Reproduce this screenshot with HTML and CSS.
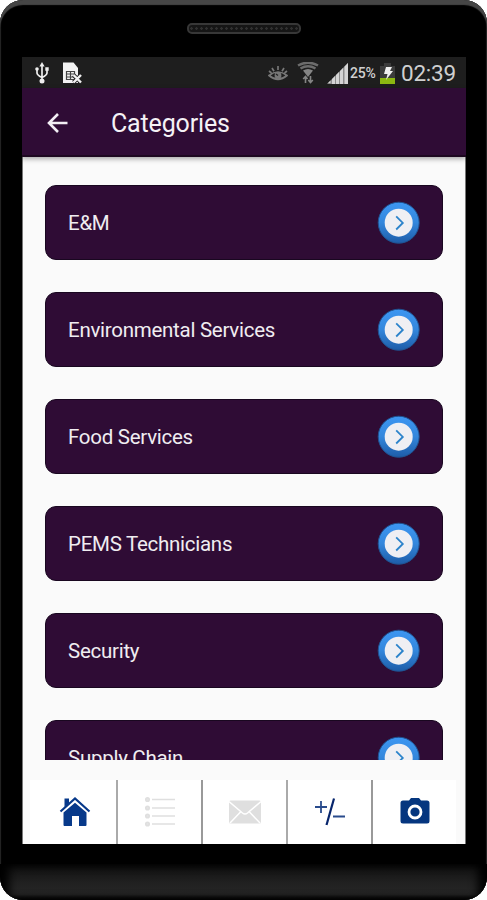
FILE: index.html
```html
<!DOCTYPE html>
<html lang="en">
<head>
<meta charset="utf-8">
<title>Categories</title>
<link rel="stylesheet" href="styles.css">
</head>
<body>
<svg class="defs" width="0" height="0" aria-hidden="true">
  <defs>
    <linearGradient id="ring" x1="0" y1="0" x2="0" y2="1">
      <stop offset="0" stop-color="#3c96f2"/>
      <stop offset=".5" stop-color="#3487dc"/>
      <stop offset="1" stop-color="#1d5ca8"/>
    </linearGradient>
    <symbol id="go" viewBox="0 0 44 44">
      <circle cx="21.700" cy="21.700" r="20.500" fill="url(#ring)" stroke="#1f5391" stroke-width="1"/>
      <circle cx="21.700" cy="21.700" r="14" fill="#efeff3"/>
      <path d="M19.200 15.300l6.600 6.600-6.600 6.600" fill="none" stroke="#2b83cb" stroke-width="1.800"/>
    </symbol>
  </defs>
</svg>
<div class="phone">
  <div class="forehead"><div class="speaker"></div></div>
  <div class="screen">
    <div class="status">
      <svg class="usb" width="14" height="22" viewBox="0 0 14 22" fill="none" stroke="#eee" stroke-width="1.700">
        <path d="M7 3v16M2 7v4q0 2 5 4.500M12 7v4q0 2-5 4.500"/>
        <path d="M7 0l2.600 4.500H4.400z" fill="#eee" stroke="none"/>
        <circle cx="7" cy="19" r="2.500" fill="#eee" stroke="none"/>
        <circle cx="2" cy="7" r="1.800" fill="#eee" stroke="none"/>
        <path d="M10.300 5.300h3.400v3.400h-3.400z" fill="#eee" stroke="none"/>
      </svg>
      <svg class="sim" width="20" height="22" viewBox="0 0 20 22">
        <path d="M1 .5h10.500L16 6v15H1z" fill="#f2f2f2"/>
        <path d="M4.500 9.500h8v8h-8zM4.500 12h8M4.500 15h8M8.500 9.500v8" fill="none" stroke="#444" stroke-width="1.200"/>
        <path d="M11.500 13l7.500 7.500M19 13l-7.500 7.500" stroke="#222" stroke-width="4"/>
        <path d="M11.500 13l7.500 7.500M19 13l-7.500 7.500" stroke="#f2f2f2" stroke-width="2.400"/>
      </svg>
      <svg class="eye" width="20" height="16" viewBox="0 0 20 16" fill="none" stroke="#777" stroke-width="1.700">
        <path d="M1 9.500Q10 2.500 19 9.500Q10 17 1 9.500zM10 0v4M4 2l2 3.300M16 2l-2 3.300M1 5l2.500 2M19 5l-2.500 2"/>
        <circle cx="10" cy="9.500" r="3.400" fill="#777" stroke="none"/>
        <path d="M8 8l2 1.500" stroke="#222" stroke-width="1.200"/>
      </svg>
      <svg class="wifi" width="22" height="22" viewBox="0 0 22 22" fill="none" stroke="#6c6c6c">
        <path d="M1 3.500Q11-2 21 3.500M3.500 6.500Q11 2 18.500 6.500" stroke-width="2.500"/>
        <path d="M6 8.600Q11 5.500 16 8.600L11 15z" fill="#858585" stroke="none"/>
        <path d="M8.500 21v-6.500M6.200 17l2.300-2.500 2 2.500M13.500 14v6.500M11.300 18l2.200 2.500 2.300-2.500" stroke="#858585" stroke-width="1.600"/>
      </svg>
      <svg class="signal" width="21" height="21" viewBox="0 0 21 21">
        <path d="M0 21L21 0v21z" fill="#8c8c8c"/>
        <path d="M1 20h2.500v-2.500zM5 21h3v-8L5 16zM9 21h3V9L9 12zM13 21h3V5l-3 3zM17.500 21H21V0l-3.500 3.500z" fill="#d4d4d4"/>
      </svg>
      <span class="percent">25%</span>
      <svg class="battery" width="15" height="21" viewBox="0 0 15 21">
        <path d="M4 0h7v3h4v18H0V3h4z" fill="#3b3b3b"/>
        <path d="M0 15h15v6H0z" fill="#8cb811"/>
        <path d="M6 4h6l-2 4h3l-7 9 1.500-6H4z" fill="#f0f0f0"/>
      </svg>
      <span class="clock">02:39</span>
    </div>
    <header class="appbar">
      <svg class="back" width="22" height="22" viewBox="0 0 22 22" fill="none" stroke="#f2eef4" stroke-width="2.600"><path d="M20.500 11H2.500M11 2l-9 9 9 9"/></svg>
      <h1>Categories</h1>
    </header>
    <main class="list">
      <div class="card"><span>E&amp;M</span><svg class="go"><use href="#go"/></svg></div>
      <div class="card"><span>Environmental Services</span><svg class="go"><use href="#go"/></svg></div>
      <div class="card"><span>Food Services</span><svg class="go"><use href="#go"/></svg></div>
      <div class="card"><span>PEMS Technicians</span><svg class="go"><use href="#go"/></svg></div>
      <div class="card"><span>Security</span><svg class="go"><use href="#go"/></svg></div>
      <div class="card"><span>Supply Chain</span><svg class="go"><use href="#go"/></svg></div>
    </main>
    <nav class="tabs">
      <div class="tab">
        <svg width="32" height="32" viewBox="0 0 32 32" fill="#07398a">
          <path d="M5.500 11V2.500H10V7z"/>
          <path d="M1.500 15.500L16 2.500l14.500 13" fill="none" stroke="#07398a" stroke-width="2.200"/>
          <path d="M4.500 16.500L16 6.800l11.500 9.700V29q0 1-1 1H20V20h-7v10H5.500q-1 0-1-1z"/>
        </svg>
      </div>
      <div class="tab">
        <svg width="32" height="32" viewBox="0 0 32 32" fill="none" stroke="#dfdfdf" stroke-width="1.500">
          <path d="M8 3.500h23M8 12h23M8 20h23M8 28h23"/>
          <g fill="#e4e4e4"><circle cx="3.500" cy="3.500" r="1.800"/><circle cx="3.500" cy="12" r="1.800"/><circle cx="3.500" cy="20" r="1.800"/><circle cx="3.500" cy="28" r="1.800"/></g>
        </svg>
      </div>
      <div class="tab">
        <svg width="32" height="32" viewBox="0 0 32 32">
          <rect x="0" y="4.500" width="32" height="23" rx="1.500" fill="#dfdfdf"/>
          <path d="M0 5.500l13.500 11.500q2.500 2 5 0L32 5.500M1 27l10.500-11M31 27L20.500 16" fill="none" stroke="#fff" stroke-width="1.500"/>
        </svg>
      </div>
      <div class="tab">
        <svg width="32" height="32" viewBox="0 0 32 32" fill="none" stroke="#294b8c" stroke-width="1.800">
          <path d="M1 11h12M7 5v12M19 20.500h12"/>
          <path d="M20 2.500l-7.500 26.500" stroke="#07256c" stroke-width="2.200"/>
        </svg>
      </div>
      <div class="tab">
        <svg width="32" height="32" viewBox="0 0 32 32">
          <path d="M4 4.500h6L12 2h8l2 2.500h6q2.500 0 2.500 2.500v18q0 2.500-2.500 2.500H4q-2.500 0-2.500-2.500V7q0-2.500 2.500-2.500z" fill="#05367f"/>
          <circle cx="16" cy="16" r="6" fill="none" stroke="#fff" stroke-width="2.800"/>
        </svg>
      </div>
    </nav>
  </div>
  <div class="chin"></div>
</div>
</body>
</html>
```
FILE: styles.css
```css
* { box-sizing: border-box; }
body { margin: 0; background: #fff; font-family: Roboto, "Liberation Sans", sans-serif; }
svg { display: block; flex: none; }
.defs { position: absolute; }
.phone {
  width: 487px; height: 900px; overflow: hidden;
  display: flex; flex-direction: column;
  background: #000; border-radius: 23px;
  box-shadow: inset 0 5px 1px #464646, inset 1px 0 1px #222, inset -1px 0 1px #222;
}
.forehead { height: 57px; flex: none; padding-top: 23px; }
.speaker {
  width: 114px; height: 11px; margin: 0 auto; border-radius: 5px;
  border: 2px solid #373737;
  background: radial-gradient(circle, #303030 1px, #151515 1.500px) 0 0 / 5px 7px;
}
.screen { width: 444px; height: 787px; margin-left: 22px; flex: none; background: #fafafa; display: flex; flex-direction: column; border-right: 1px solid #777; border-left: 1px solid #777; }
.status { height: 31px; flex: none; margin: 0 -1px; background: #1e1e1e; display: flex; align-items: center; color: #d0d0d0; padding: 0 10px 0 13px; }
.sim { margin-left: 13px; }
.eye { margin-left: 186px; margin-top: 2px; }
.wifi { margin-left: 9px; }
.signal { margin-left: 8px; margin-top: 2px; }
.percent { width: 28px; margin-left: 2px; font-size: 14px; font-weight: 500; letter-spacing: -.2px; }
.battery { margin-left: 2px; margin-top: 1px; }
.clock { margin-left: 6px; font-size: 22.500px; letter-spacing: -.2px; }
.appbar { position: relative; height: 69px; flex: none; margin: 0 -1px; padding: 2px 0 0 25px; background: #2f0c35; border-bottom: 2px solid #1d0820; display: flex; align-items: center; box-shadow: 0 2px 5px #0005; }
.appbar h1 { margin: 2px 0 0 42px; color: #f5f2f6; font-size: 25px; font-weight: 400; letter-spacing: -.15px; }
.list { height: 603px; flex: none; overflow: hidden; padding: 28px 22px 0; display: flex; flex-direction: column; gap: 32px; }
.card { height: 75px; flex: none; border: 1px solid #190720; border-radius: 11px; background: #2f0c35; color: #f0edf1; display: flex; align-items: center; justify-content: space-between; padding: 0 21px 0 22px; font-size: 20.500px; letter-spacing: -.27px; }
.go { width: 44px; height: 44px; }
.tabs { height: 64px; flex: none; margin: 20px 9px 0 7px; padding-left: 3px; background: #fff; display: flex; }
.tab { flex: 1; display: flex; align-items: center; justify-content: center; border-right: 2px solid #999; }
.tab:nth-child(odd) { border-right-color: #aaa; }
.tab:last-child { border-right: 0; }
.chin { height: 36px; flex: none; margin-top: 20px; background: linear-gradient(#101010, #202020 50%, #272727 85%, #080808); box-shadow: inset 9px 0 10px #000, inset -9px 0 10px #000; }
```
